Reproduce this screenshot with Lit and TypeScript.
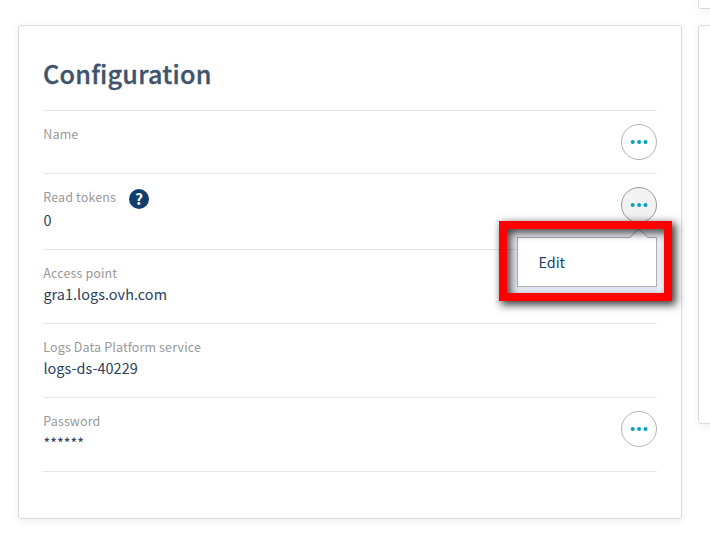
import { LitElement, html, css, svg, nothing } from "lit";
import { customElement, property } from "lit/decorators.js";

@customElement("more-button")
class MoreButton extends LitElement {
  @property({ type: Boolean }) active = false;

  static styles = css`
    :host { display: block; width: 36px; height: 36px; }
    .button { display: block; width: 36px; height: 36px; padding: 0; border: 0; background: none; }
    .ring { fill: #fff; stroke: #b3b3b3; stroke-width: 1; }
    .ring.on { fill: #f2f2f2; stroke: #999; }
    .dot { fill: #00a2bf; }
  `;

  render() {
    return html`<button class="button" aria-label="Actions">
      <svg width="36" height="36" viewBox="0 0 36 36">
        <circle class="ring ${this.active ? "on" : ""}" cx="18" cy="18" r="17.5"></circle>
        ${[11.7, 18.1, 24.5].map((x) => svg`<circle class="dot" cx=${x} cy="18" r="2"></circle>`)}
      </svg>
    </button>`;
  }
}

@customElement("action-menu")
class ActionMenu extends LitElement {
  static styles = css`
    :host { display: block; position: relative; width: 140px; height: 50px; }
    .menu {
      box-sizing: border-box; height: 50px; padding-left: 20.4px;
      border: 1px solid #b0b0b0; background: #fff;
      box-shadow: 0 2px 8px 3px rgba(0, 60, 170, 0.15);
      font-size: 14.4px; line-height: 48px; color: #113f6d;
    }
    .caret { position: absolute; top: -9px; right: 8px; }
    .fill { fill: #fff; }
    .line { fill: none; stroke: #a6a6a6; }
  `;

  render() {
    return html`<div class="menu">Edit</div>
      <svg class="caret" width="20" height="11" viewBox="0 0 20 11">
        <path class="fill" d="M1 10L10 1l9 9v1H1z"></path>
        <path class="line" d="M1 9.5L10 .7l9 8.8"></path>
      </svg>`;
  }
}

interface Item {
  label: string;
  value: string;
  size: string;
  help?: boolean;
  action?: boolean;
  open?: boolean;
}

const items: Item[] = [
  { label: "Name", value: "", size: "short", action: true },
  { label: "Read tokens", value: "0", size: "tall", help: true, action: true, open: true },
  { label: "Access point", value: "gra1.logs.ovh.com", size: "" },
  { label: "Logs Data Platform service", value: "logs-ds-40229", size: "" },
  { label: "Password", value: "******", size: "masked", action: true },
];

@customElement("app-root")
class AppRoot extends LitElement {
  static styles = css`
    :host {
      display: block; width: 710px; height: 537px; overflow: hidden; background: #fff;
      font-family: "Noto Sans CJK SC", "Noto Sans", sans-serif;
    }
    .page { display: grid; grid-template-columns: 664px 664px; column-gap: 16px; padding-left: 18px; }
    .card {
      box-sizing: border-box; border: 1px solid #d9dbde; border-radius: 3px; background: #fff;
      box-shadow: 0 2px 8px rgba(0, 0, 0, 0.07);
    }
    .main { height: 494px; margin-top: 25px; padding: 24px; }
    .side { display: flex; flex-direction: column; gap: 16px; }
    .upper { height: 9px; border-top: 0; border-radius: 0 0 3px 3px; }
    .lower { height: 399px; }
    .title {
      margin: 0; height: 60px; font-size: 25.2px; line-height: 47px; font-weight: 500; color: #3f546c;
      letter-spacing: 0.22px; -webkit-text-stroke: 0.35px #3f546c;
    }
    .list { margin: 0; border-bottom: 1px solid #e6e6e6; }
    .row {
      box-sizing: border-box; display: flex; justify-content: space-between; height: 74px;
      padding-top: 13px; border-top: 1px solid #e6e6e6;
    }
    .row.short { height: 63px; }
    .row.tall { height: 76px; }
    .label {
      display: flex; height: 20px; padding-left: 0.3px; font-size: 12.5px; line-height: 20px;
      color: #999; letter-spacing: 0.13px;
    }
    .value {
      margin: 0; padding-left: 0.4px; font-size: 14.4px; line-height: 22px; color: #2b405b;
      letter-spacing: 0.06px;
    }
    .tall .value { margin-top: 2px; }
    .masked .value { margin-top: 1px; }
    .help { margin: 2px 0 0 13px; overflow: visible; }
    .disc { fill: #113f6d; }
    .mark { font: bold 15.5px/18px "Noto Sans CJK SC", sans-serif; fill: #fff; text-anchor: middle; }
    .anchor { position: relative; width: 36px; height: 36px; }
    .popup { position: absolute; top: 50px; right: 0; }
    .highlight {
      position: absolute; top: 34px; right: -15px; box-sizing: border-box; width: 173px; height: 80px;
      border: 8px solid #f00;
      box-shadow: 3px 3px 8px 1px rgba(0, 0, 0, 0.75), inset 4px 4px 8px rgba(0, 0, 0, 0.75);
    }
  `;

  row(item: Item) {
    return html`<div class="row ${item.size}">
      <div>
        <dt class="label">
          <span>${item.label}</span>
          ${item.help
            ? html`<svg class="help" width="20" height="20" viewBox="0 0 20 20">
                <circle class="disc" cx="10" cy="10" r="10"></circle>
                <text class="mark" x="10" y="15.6">?</text>
              </svg>`
            : nothing}
        </dt>
        <dd class="value">${item.value}</dd>
      </div>
      ${item.action
        ? html`<div class="anchor">
            <more-button ?active=${item.open}></more-button>
            ${item.open
              ? html`<action-menu class="popup"></action-menu><div class="highlight"></div>`
              : nothing}
          </div>`
        : nothing}
    </div>`;
  }

  render() {
    return html`<div class="page">
      <section class="card main">
        <h2 class="title">Configuration</h2>
        <dl class="list">${items.map((item) => this.row(item))}</dl>
      </section>
      <div class="side">
        <section class="card upper"></section>
        <section class="card lower"></section>
      </div>
    </div>`;
  }
}
